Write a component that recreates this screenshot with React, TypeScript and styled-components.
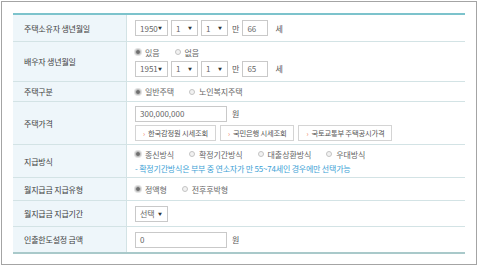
import styled, { createGlobalStyle } from "styled-components";

const GlobalStyle = createGlobalStyle`
  html, body {
    margin: 0;
    padding: 0;
    background: #fff;
  }
  body {
    font-family: "Noto Sans CJK KR", "Noto Sans", sans-serif;
  }
  * {
    box-sizing: border-box;
  }
`;

const Frame = styled.div`
  margin: 1px 0 0 1px;
  width: 476px;
  height: 264px;
  border: 1px solid #a4a4a4;
  padding: 11px 0 0 11px;
`;

const Table = styled.div`
  width: 452px;
  border-top: 2px solid #7cc3cc;
  border-bottom: 2px solid #a9c9ca;
`;

const Row = styled.div<{ h: number }>`
  display: grid;
  grid-template-columns: 114px 1fr;
  height: ${(p) => p.h}px;
  border-bottom: 1px solid #d3e3e5;

  &:last-child {
    border-bottom: none;
  }
`;

const Label = styled.div`
  background: #eef6fa;
  border-right: 1px solid #d3e3e5;
  padding-left: 11px;
  display: flex;
  align-items: center;
  font-size: 8px;
  letter-spacing: -0.2px;
  color: #3f3f3f;
`;

const Value = styled.div`
  padding-left: 8px;
  display: flex;
  flex-direction: column;
  justify-content: center;
  gap: 3px;
`;

const Line = styled.div`
  display: flex;
  align-items: center;
  gap: 3px;
  font-size: 8px;
  color: #555;
`;

const Select = styled.div<{ w: number }>`
  width: ${(p) => p.w}px;
  height: 16px;
  border: 1px solid #c9c9c9;
  background: #fff;
  display: flex;
  align-items: center;
  justify-content: space-between;
  padding: 0 5px 0 4px;
  font-size: 8px;
  color: #666;

  &::after {
    content: "▼";
    font-size: 4px;
    color: #333;
  }
`;

const Input = styled.div<{ w: number }>`
  width: ${(p) => p.w}px;
  height: 16px;
  border: 1px solid #c9c9c9;
  background: #fff;
  display: flex;
  align-items: center;
  padding: 0 4px;
  font-size: 8px;
  color: #666;
`;

const Unit = styled.span<{ gap?: number }>`
  margin-left: ${(p) => p.gap ?? 1}px;
  font-size: 8px;
  color: #555;
`;

const Radios = styled.div`
  display: flex;
  align-items: center;
  gap: 15px;
`;

const Radio = styled.label<{ checked?: boolean }>`
  display: flex;
  align-items: center;
  gap: 4px;
  font-size: 8px;
  letter-spacing: -0.1px;
  color: #666;

  &::before {
    content: "";
    width: 6px;
    height: 6px;
    border-radius: 50%;
    box-sizing: border-box;
    border: 1px solid #c4c4c4;
    background: ${(p) => (p.checked ? "#6f6f6f" : "#f2f2f2")};
    box-shadow: ${(p) => (p.checked ? "0 0 0 1px #e2e2e2" : "none")};
  }
`;

const Buttons = styled.div`
  display: flex;
  gap: 4px;
`;

const LinkButton = styled.div`
  height: 16px;
  border: 1px solid #d4d4d4;
  background: #fff;
  display: flex;
  align-items: center;
  gap: 3px;
  padding: 0 7px;
  font-size: 7.3px;
  letter-spacing: -0.2px;
  color: #555;

  &::before {
    content: "›";
    font-size: 7px;
    color: #ef7f62;
  }
`;

const Note = styled.div`
  font-size: 8px;
  letter-spacing: -0.2px;
  color: #3d9fd5;
`;

export default function App() {
  return (
    <>
      <GlobalStyle />
      <Frame>
        <Table>
          <Row h={27}>
            <Label>주택소유자 생년월일</Label>
            <Value>
              <Line>
                <Select w={33}>1950</Select>
                <Select w={27}>1</Select>
                <Select w={27}>1</Select>
                <Unit gap={1}>만</Unit>
                <Input w={26}>66</Input>
                <Unit gap={4}>세</Unit>
              </Line>
            </Value>
          </Row>
          <Row h={40}>
            <Label>배우자 생년월일</Label>
            <Value>
              <Radios>
                <Radio checked>있음</Radio>
                <Radio>없음</Radio>
              </Radios>
              <Line>
                <Select w={33}>1951</Select>
                <Select w={27}>1</Select>
                <Select w={27}>1</Select>
                <Unit gap={1}>만</Unit>
                <Input w={26}>65</Input>
                <Unit gap={4}>세</Unit>
              </Line>
            </Value>
          </Row>
          <Row h={20}>
            <Label>주택구분</Label>
            <Value>
              <Radios>
                <Radio checked>일반주택</Radio>
                <Radio>노인복지주택</Radio>
              </Radios>
            </Value>
          </Row>
          <Row h={43}>
            <Label>주택가격</Label>
            <Value>
              <Line>
                <Input w={92}>300,000,000</Input>
                <Unit gap={2}>원</Unit>
              </Line>
              <Buttons>
                <LinkButton>한국감정원 시세조회</LinkButton>
                <LinkButton>국민은행 시세조회</LinkButton>
                <LinkButton>국토교통부 주택공시가격</LinkButton>
              </Buttons>
            </Value>
          </Row>
          <Row h={33}>
            <Label>지급방식</Label>
            <Value>
              <Radios>
                <Radio checked>종신방식</Radio>
                <Radio>확정기간방식</Radio>
                <Radio>대출상환방식</Radio>
                <Radio>우대방식</Radio>
              </Radios>
              <Note>- 확정기간방식은 부부 중 연소자가 만 55~74세인 경우에만 선택가능</Note>
            </Value>
          </Row>
          <Row h={23}>
            <Label>월지급금 지급유형</Label>
            <Value>
              <Radios>
                <Radio checked>정액형</Radio>
                <Radio>전후후박형</Radio>
              </Radios>
            </Value>
          </Row>
          <Row h={26}>
            <Label>월지급금 지급기간</Label>
            <Value>
              <Line>
                <Select w={33}>선택</Select>
              </Line>
            </Value>
          </Row>
          <Row h={25}>
            <Label>인출한도설정 금액</Label>
            <Value>
              <Line>
                <Input w={92}>0</Input>
                <Unit gap={2}>원</Unit>
              </Line>
            </Value>
          </Row>
        </Table>
      </Frame>
    </>
  );
}
